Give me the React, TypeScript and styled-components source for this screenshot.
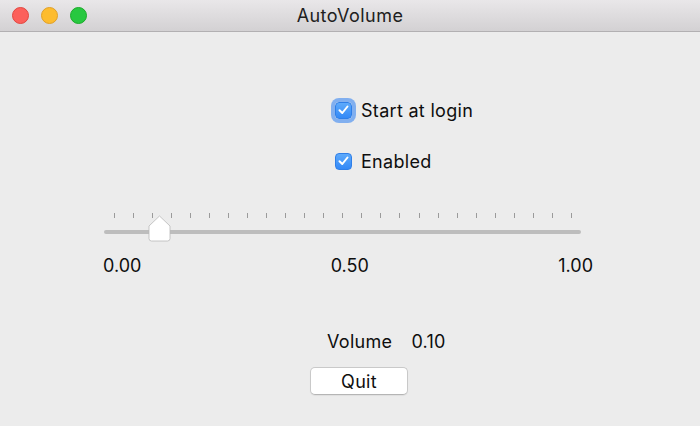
import React from "react";
import styled, { createGlobalStyle } from "styled-components";

const Global = createGlobalStyle`
  html, body { margin: 0; padding: 0; background: #ececec; }
  body { font-family: Inter, "Helvetica Neue", "Liberation Sans", sans-serif; }
`;

const Window = styled.div`
  width: 700px;
  height: 426px;
  display: flex;
  flex-direction: column;
  background: #ececec;
  color: #0e0e0e;
  overflow: hidden;
`;

const TitleBar = styled.div`
  box-sizing: border-box;
  height: 32px;
  flex: none;
  display: grid;
  grid-template-columns: 1fr auto 1fr;
  align-items: center;
  background: linear-gradient(#e9e7e9, #d3d1d3);
  border-bottom: 1px solid #b2b0b2;
`;

const Lights = styled.div`
  display: flex;
  gap: 12px;
  padding-left: 12px;
`;

const Light = styled.span<{ $fill: string; $edge: string }>`
  width: 17px;
  height: 17px;
  box-sizing: border-box;
  border-radius: 50%;
  background: ${(p) => p.$fill};
  border: 1px solid ${(p) => p.$edge};
`;

const Title = styled.div`
  font-size: 18px;
  color: #202020;
  letter-spacing: 0.45px;
`;

const Content = styled.div`
  display: flex;
  flex-direction: column;
`;

const CheckGroup = styled.div`
  display: flex;
  flex-direction: column;
  gap: 29px;
  padding-left: 335px;
  margin-top: 67px;
`;

const CheckRow = styled.label`
  height: 22px;
  display: flex;
  align-items: center;
  gap: 9px;
  font-size: 18px;
  letter-spacing: 0.3px;
`;

const Box = styled.span<{ $focused?: boolean }>`
  width: 17px;
  height: 17px;
  box-sizing: border-box;
  border-radius: 4px;
  background: linear-gradient(#5eaafb, #3389f7);
  border: 1px solid #2f7fe8;
  display: flex;
  align-items: center;
  justify-content: center;
  box-shadow: ${(p) => (p.$focused ? "0 0 0 4px rgba(110, 165, 240, 0.85)" : "none")};
`;

const SliderWrap = styled.div`
  margin-left: 104px;
  margin-top: 41px;
  width: 477px;
  display: flex;
  flex-direction: column;
  gap: 12px;
`;

const Ticks = styled.div`
  margin-left: 10px;
  width: 458px;
  height: 5px;
  display: flex;
  justify-content: space-between;
`;

const Tick = styled.span`
  width: 1px;
  height: 5px;
  background: #9a9a9a;
`;

const Track = styled.div`
  position: relative;
  height: 4px;
  border-radius: 2px;
  background: #bdbdbd;
`;

const Thumb = styled.svg`
  position: absolute;
  top: -15px;
  width: 23px;
  height: 27px;
  overflow: visible;
`;

const Labels = styled.div`
  margin-left: 103px;
  margin-top: 22px;
  width: 490px;
  display: flex;
  justify-content: space-between;
  font-size: 18px;
  line-height: 20px;
`;

const VolumeRow = styled.div`
  margin-top: 56px;
  padding-left: 327px;
  display: flex;
  gap: 19px;
  font-size: 18px;
  letter-spacing: 0.3px;
  line-height: 20px;
`;

const QuitButton = styled.button`
  margin-top: 15px;
  margin-left: 310px;
  width: 98px;
  height: 28px;
  box-sizing: border-box;
  background: #ffffff;
  border: 1px solid #c9c9c9;
  border-bottom-color: #b5b5b5;
  border-radius: 5px;
  box-shadow: 0 1px 1px rgba(0, 0, 0, 0.06);
  font-family: inherit;
  font-size: 18px;
  letter-spacing: 0.3px;
  color: #0e0e0e;
  padding: 0;
`;

const Check = () => (
  <svg width="11" height="10" viewBox="0 0 11 10">
    <polyline points="1.5,5.2 4.3,8 9.5,1.5" fill="none" stroke="#fff" strokeWidth="2" strokeLinecap="round" strokeLinejoin="round" />
  </svg>
);

export default function App() {
  const value = 0.1;
  const ticks = Array.from({ length: 25 });
  return (
    <Window>
      <Global />
      <TitleBar>
        <Lights>
          <Light $fill="#fc605b" $edge="#e2463f" />
          <Light $fill="#fdbc2f" $edge="#e0a028" />
          <Light $fill="#28c840" $edge="#1aab29" />
        </Lights>
        <Title>AutoVolume</Title>
        <span />
      </TitleBar>
      <Content>
        <CheckGroup>
          <CheckRow>
            <Box $focused>
              <Check />
            </Box>
            Start at login
          </CheckRow>
          <CheckRow>
            <Box>
              <Check />
            </Box>
            Enabled
          </CheckRow>
        </CheckGroup>
        <SliderWrap>
          <Ticks>
            {ticks.map((_, i) => (
              <Tick key={i} />
            ))}
          </Ticks>
          <Track>
            <Thumb style={{ left: 10 + value * 457 - 11.5 }} viewBox="0 0 23 27">
              <path
                d="M1 11 L11.5 1 L22 11 V23.5 Q22 26 19.5 26 H3.5 Q1 26 1 23.5 Z"
                fill="#ffffff"
                stroke="#b9b9b9"
                strokeWidth="0.8"
                strokeLinejoin="round"
              />
            </Thumb>
          </Track>
        </SliderWrap>
        <Labels>
          <span>0.00</span>
          <span>0.50</span>
          <span>1.00</span>
        </Labels>
        <VolumeRow>
          <span>Volume</span>
          <span>0.10</span>
        </VolumeRow>
        <QuitButton>Quit</QuitButton>
      </Content>
    </Window>
  );
}
